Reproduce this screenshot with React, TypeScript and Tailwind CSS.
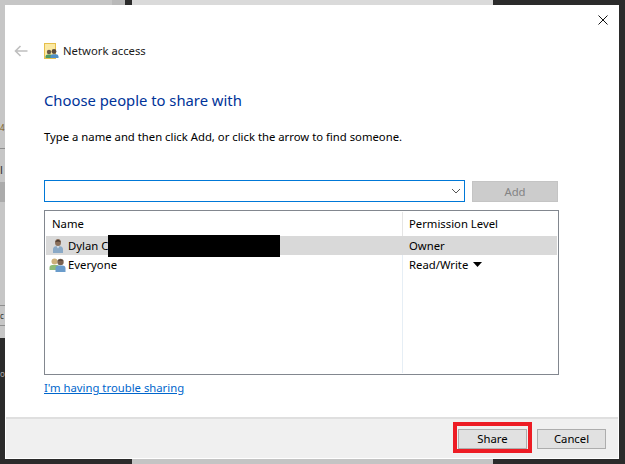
import React from "react";

const PersonIcon = () => (
  <svg width="14" height="16" viewBox="0 0 14 16" className="shrink-0">
    <ellipse cx="7" cy="4.5" rx="3" ry="3.6" fill="#8a6f5a" />
    <path d="M4.5 3.5 Q7 0 9.5 3.5 L9.5 4 Q7 2.8 4.5 4 Z" fill="#4a3a30" />
    <path d="M2 15 V11.5 Q2 8.6 5 8.2 L9 8.2 Q12 8.6 12 11.5 V15 Z" fill="#8aa9c6" />
    <path d="M5.6 8.2 L7 10.5 L8.4 8.2 Z" fill="#e3e8ee" />
  </svg>
);

const GroupIcon = () => (
  <svg width="18" height="16" viewBox="0 0 18 16" className="shrink-0">
    <circle cx="5.5" cy="4.5" r="3" fill="#cdb07a" />
    <path d="M0.5 13 V10.5 Q0.5 8 3.5 8 H8 Q10 8 10 11 V13 Z" fill="#8dbb78" />
    <circle cx="11.5" cy="5" r="3.2" fill="#7a6250" />
    <path d="M8.5 4 Q11.5 0.8 14.5 4 Q11.5 3 8.5 4 Z" fill="#4a3a30" />
    <path d="M6.5 15 V11.5 Q6.5 8.8 9.5 8.6 H13.5 Q16.5 8.8 16.5 11.5 V15 Z" fill="#6a9ccb" />
  </svg>
);

const NetworkIcon = () => (
  <svg width="15" height="16" viewBox="0 0 15 16" className="shrink-0">
    <rect x="0.5" y="0.5" width="11" height="15" fill="#fbe9a3" stroke="#e6bf4a" />
    <circle cx="5" cy="9" r="2.2" fill="#6b5a48" />
    <path d="M1.5 15 V13.5 Q1.5 11.5 4 11.5 H6.5 Q8 11.5 8 13.5 V15 Z" fill="#4f9a63" />
    <circle cx="10" cy="8.5" r="2.4" fill="#5b4a3c" />
    <path d="M6.5 15 V13.5 Q6.5 11.2 9 11.2 H12 Q14.5 11.2 14.5 13.5 V15 Z" fill="#4f8fc8" />
  </svg>
);

export default function App() {
  return (
    <div
      className="relative w-[625px] h-[464px] overflow-hidden bg-[#2b2b2b] text-[11.3px] leading-4 text-black"
      style={{ fontFamily: '"Noto Sans", "Open Sans", sans-serif' }}
    >
      {/* windows behind the dialog */}
      <div className="absolute left-0 top-0 w-[112px] h-[338px] bg-[#c6c6c6]" />
      <div className="absolute left-[112px] top-0 w-[13px] h-[5px] bg-[#b9b9b9]" />
      <div className="absolute left-[132px] top-0 w-[361px] h-[5px] bg-[#dadada]" />
      <div className="absolute left-[132px] top-[459px] w-[361px] h-[5px] bg-[#c4c4c4]" />
      <div className="absolute left-0 top-[148px] w-[5px] h-px bg-[#8e8e8e]" />
      <div className="absolute left-0 top-[182px] w-[5px] h-[20px] bg-[#ababab]" />
      <div className="absolute left-0 top-[305px] w-[5px] h-px bg-[#8e8e8e]" />
      <div className="absolute left-0 top-[325px] w-[5px] h-px bg-[#8e8e8e]" />
      <div className="absolute left-0 top-[120px] text-[8px] text-[#7a5a20]">4</div>
      <div className="absolute left-0 top-[162px] text-[#333333]">l</div>
      <div className="absolute left-0 top-[308px] text-[8px] text-[#333333]">c</div>
      <div className="absolute left-0 top-[366px] text-[8px] text-[#aaaaaa]">o</div>

      {/* dialog */}
      <div className="absolute left-[5px] top-[5px] w-[614px] h-[454px] bg-white flex flex-col">
        <div className="flex justify-end pt-[10px] pr-[11px]">
          <svg width="10" height="10" viewBox="0 0 10 10">
            <path d="M0.5 0.5 L9.5 9.5 M9.5 0.5 L0.5 9.5" stroke="#111111" strokeWidth="1" />
          </svg>
        </div>

        <div className="flex items-center h-4 mt-[18px] pl-[9px]">
          <svg width="14" height="12" viewBox="0 0 14 12" className="shrink-0">
            <path d="M13.5 6 H1.5 M6.5 1 L1.5 6 L6.5 11" fill="none" stroke="#bfbfbf" strokeWidth="1.6" />
          </svg>
          <div className="ml-[16px]">
            <NetworkIcon />
          </div>
          <span className="ml-1 text-[#1a1a1a]">Network access</span>
        </div>

        <div className="ml-[39px] mt-[31px] text-[14.8px] leading-5 text-[#003399]">Choose people to share with</div>
        <div className="ml-[39px] mt-[19px]">Type a name and then click Add, or click the arrow to find someone.</div>

        <div className="ml-[39px] mt-[35px] flex items-start">
          <div className="w-[421px] h-[22px] border border-[#0078d7] bg-white flex items-center justify-end pr-[3px]">
            <svg width="10" height="6" viewBox="0 0 10 6">
              <path d="M1 1 L5 5 L9 1" fill="none" stroke="#555555" strokeWidth="1" />
            </svg>
          </div>
          <button className="ml-[7px] mt-px w-[86px] h-[21px] bg-[#cccccc] border border-[#c4c4c4] text-[#838383] flex items-center justify-center">
            Add
          </button>
        </div>

        <div className="ml-[39px] mt-[8px] w-[515px] h-[165px] border border-[#82878f] p-px flex flex-col">
          <div className="flex h-[24px] items-center">
            <div className="w-[357px] h-full pl-[6px] flex items-center border-r border-[#e5e5e5]">Name</div>
            <div className="pl-[6px]">Permission Level</div>
          </div>
          <div className="flex h-[19px] items-center bg-[#d9d9d9]">
            <div className="w-[357px] pl-[5px] flex items-center gap-[3px]">
              <PersonIcon />
              <span>Dylan C</span>
            </div>
            <div className="pl-[6px]">Owner</div>
          </div>
          <div className="flex h-[19px] items-center">
            <div className="w-[357px] h-full pl-[3px] flex items-center gap-[1px] border-r border-[#e6eef5]">
              <GroupIcon />
              <span>Everyone</span>
            </div>
            <div className="pl-[6px] flex items-center gap-[5px]">
              <span>Read/Write</span>
              <svg width="9" height="5" viewBox="0 0 9 5">
                <path d="M0 0 H9 L4.5 5 Z" fill="#000000" />
              </svg>
            </div>
          </div>
          <div className="flex-1 w-[357px] border-r border-[#e6eef5]" />
        </div>

        <a className="ml-[39px] mt-[5px] self-start underline text-[#0066cc]">I'm having trouble sharing</a>

        <div className="mt-auto mx-px mb-px h-[41px] bg-[#f0f0f0] border-t-2 border-[#dfdfdf] flex items-center justify-end pr-[12px] gap-[10px]">
          <button className="w-[69px] h-[20px] bg-[#e1e1e1] border border-[#adadad] flex items-center justify-center">Share</button>
          <button className="w-[69px] h-[20px] bg-[#e1e1e1] border border-[#adadad] flex items-center justify-center">Cancel</button>
        </div>
      </div>

      {/* overlays on the screenshot */}
      <div className="absolute left-[108px] top-[235px] w-[172px] h-[22px] bg-black" />
      <div className="absolute left-[453px] top-[422px] w-[79px] h-[31px] border-[4px] border-[#ed1c24]" />
    </div>
  );
}
